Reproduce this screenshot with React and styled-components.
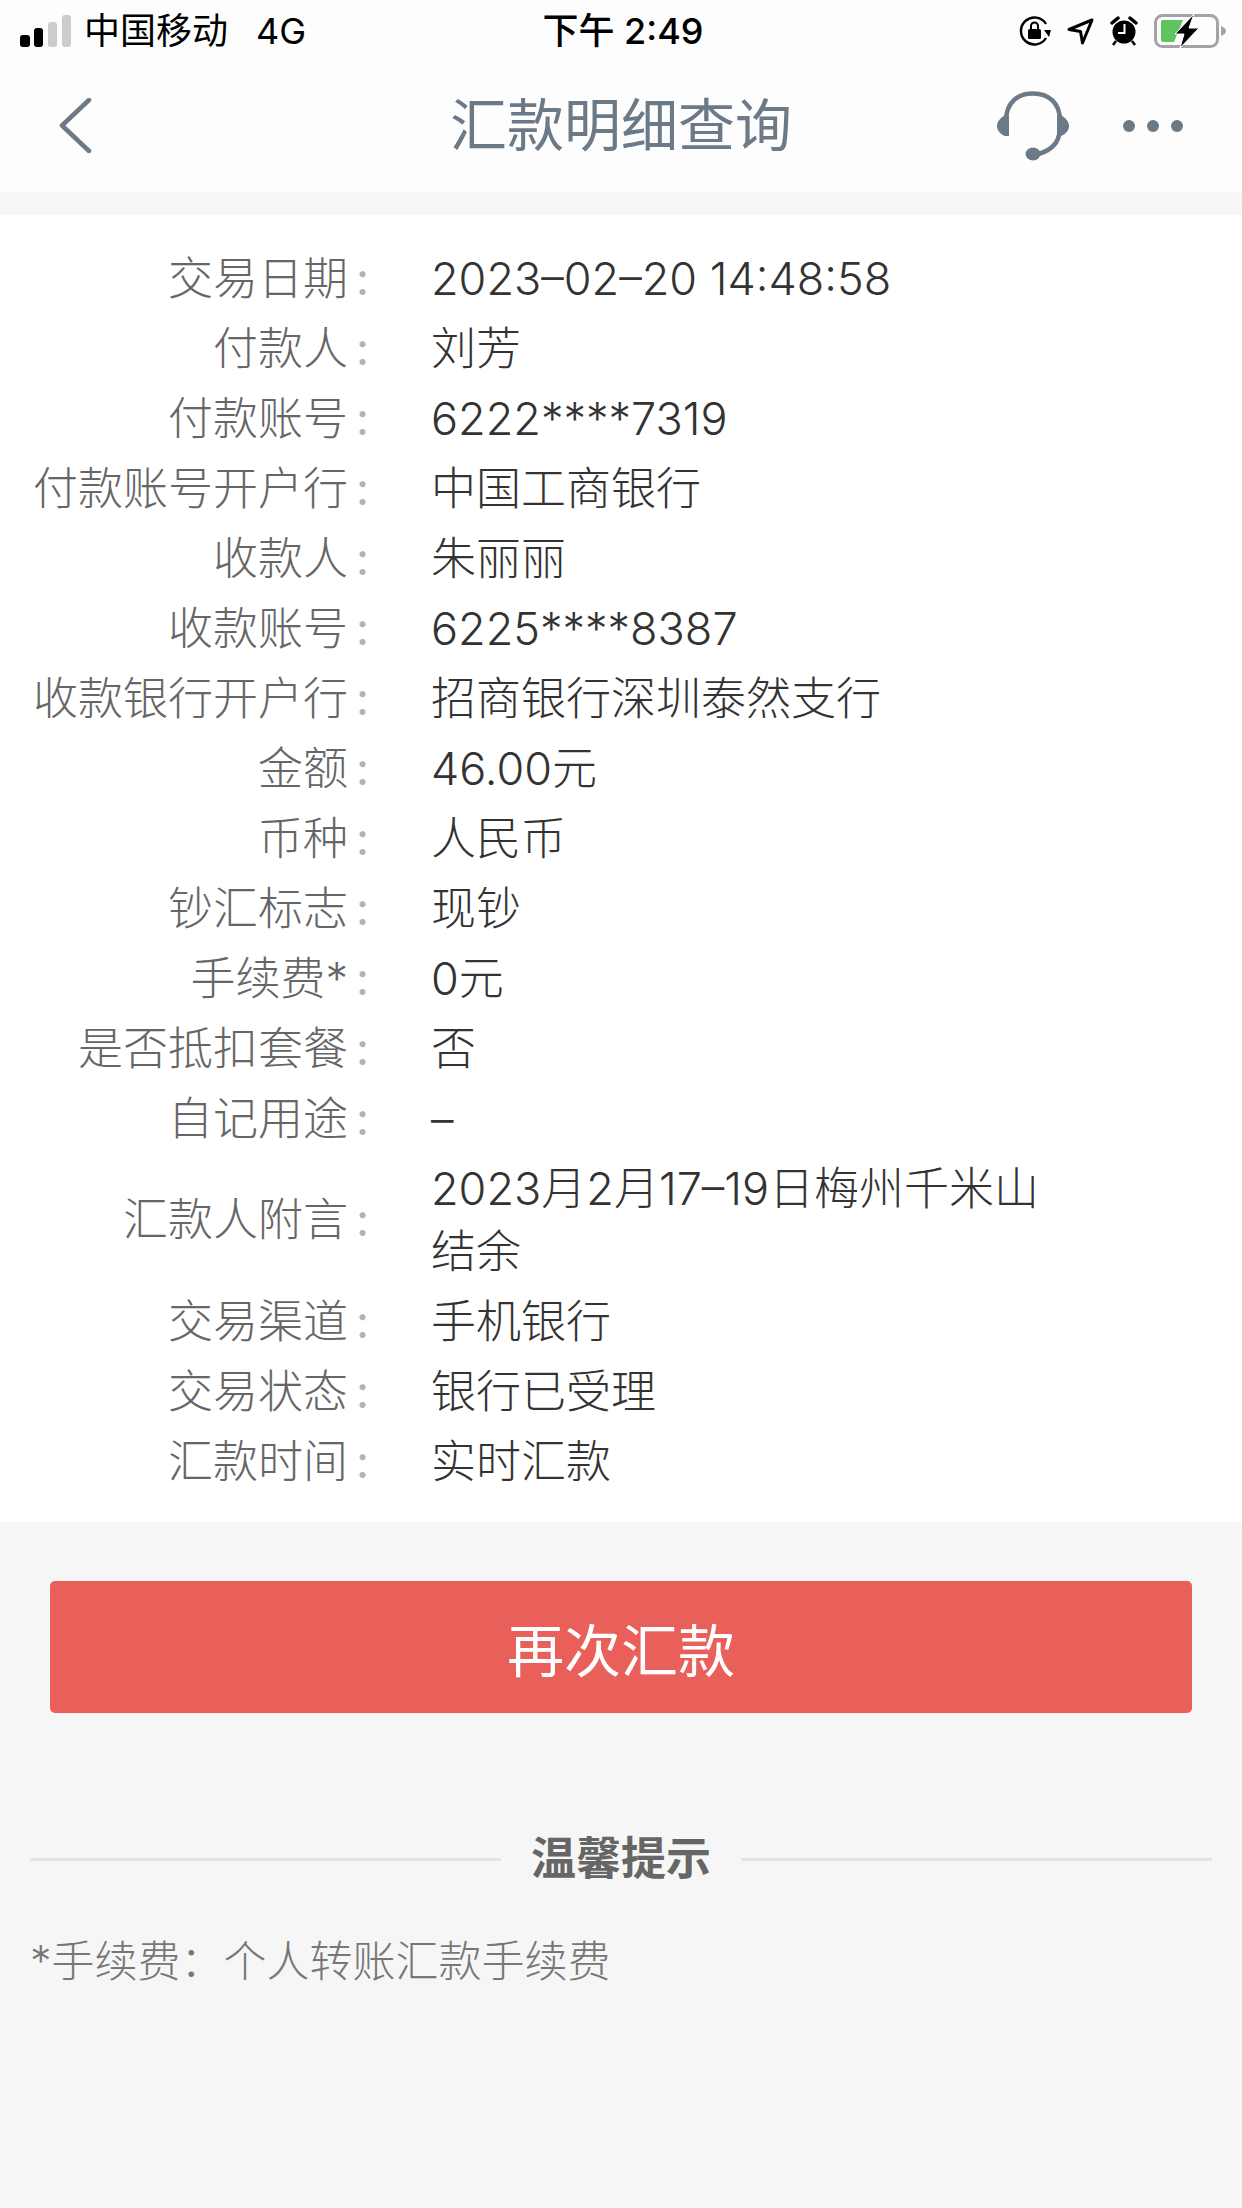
import styled, { createGlobalStyle } from "styled-components";

const rows = [
  ["交易日期", "2023–02–20 14:48:58"],
  ["付款人", "刘芳"],
  ["付款账号", "6222****7319"],
  ["付款账号开户行", "中国工商银行"],
  ["收款人", "朱丽丽"],
  ["收款账号", "6225****8387"],
  ["收款银行开户行", "招商银行深圳泰然支行"],
  ["金额", "46.00元"],
  ["币种", "人民币"],
  ["钞汇标志", "现钞"],
  ["手续费*", "0元"],
  ["是否抵扣套餐", "否"],
  ["自记用途", "–"],
  ["汇款人附言", "2023月2月17–19日梅州千米山结余"],
  ["交易渠道", "手机银行"],
  ["交易状态", "银行已受理"],
  ["汇款时间", "实时汇款"],
];

const App = () => {
  return (
    <Page lang="zh-CN">
      <GlobalStyle />

      <StatusBar>
        <StatusLeft>
          <svg width="52" height="32" viewBox="0 0 52 32">
            <rect x="0" y="20" width="10" height="12" rx="3" fill="#000" />
            <rect x="14" y="13" width="9" height="19" rx="3" fill="#000" />
            <rect x="28" y="7" width="9" height="25" rx="3" fill="#ccc" />
            <rect x="42" y="0" width="9" height="32" rx="3" fill="#ccc" />
          </svg>
          <Carrier>中国移动</Carrier>
          <Carrier>4G</Carrier>
        </StatusLeft>

        <Clock>下午 2:49</Clock>

        <StatusRight>
          <svg width="32" height="30" viewBox="0 0 32 30">
            <path d="M27 22A13.5 13.5 0 1 1 27 8" fill="none" stroke="#000" strokeWidth="2.4" />
            <path d="M25 14l5 7 2-7z" fill="#000" />
            <rect x="9" y="13" width="13" height="10" rx="1.5" fill="#000" />
            <path d="M12 13V10a3.5 3.5 0 0 1 7 0v3" fill="none" stroke="#000" strokeWidth="2" />
          </svg>
          <svg width="27" height="27" viewBox="0 0 27 27">
            <path d="M2 11.5L25 2 15.5 25 13.5 13.5z" fill="none" stroke="#000" strokeWidth="3" strokeLinejoin="round" />
          </svg>
          <svg width="28" height="30" viewBox="0 0 28 30">
            <circle cx="14" cy="16" r="11.5" fill="#000" />
            <path d="M2 7l6-5M26 7l-6-5" stroke="#000" strokeWidth="3.5" strokeLinecap="round" />
            <path d="M6 25l-3 4M22 25l3 4" stroke="#000" strokeWidth="2.5" />
            <path d="M14.5 8v9H8" fill="none" stroke="#fff" strokeWidth="2" />
          </svg>
          <svg width="72" height="34" viewBox="0 0 72 34">
            <rect x="1.5" y="1.5" width="62" height="31" rx="7" fill="none" stroke="#a3a3a3" strokeWidth="3" />
            <path d="M67 12c3 1 5 3 5 5s-2 4-5 5z" fill="#a3a3a3" />
            <path d="M9 6H29L20 28H9a2 2 0 0 1-2-2V8a2 2 0 0 1 2-2z" fill="#5fc45f" />
            <path d="M40 0L21 20H30L26 34 45 14H35z" fill="#000" stroke="#fff" strokeWidth="1" />
          </svg>
        </StatusRight>
      </StatusBar>

      <NavBar>
        <BackButton>
          <svg width="33" height="55" viewBox="0 0 33 55">
            <path d="M30 2L3 27.5 30 53" fill="none" stroke="#6b7a86" strokeWidth="4.5" strokeLinecap="round" strokeLinejoin="round" />
          </svg>
        </BackButton>
        <NavTitle>汇款明细查询</NavTitle>
        <NavActions>
          <svg width="72" height="70" viewBox="0 0 72 70">
            <path d="M9 30C9 11 21 2.500 36 2.500S63 11 63 30" fill="none" stroke="#6b7a86" strokeWidth="4.500" />
            <path d="M12 24H8C3 27 0 31 0 35s3 8 8 10h4zM60 24h4c5 3 8 7 8 11s-3 8-8 10h-4z" fill="#6b7a86" />
            <path d="M62 44C60 55 50 61 38 64" fill="none" stroke="#6b7a86" strokeWidth="4.500" />
            <ellipse cx="36" cy="63" rx="7.500" ry="6.500" fill="#6b7a86" />
          </svg>
          <MoreDots>
            <Dot />
            <Dot />
            <Dot />
          </MoreDots>
        </NavActions>
      </NavBar>

      <DetailCard>
        {rows.map(([label, value]) => (
          <Row key={label}>
            <Label>{label}</Label>
            <Colon>:</Colon>
            <Value>{value}</Value>
          </Row>
        ))}
      </DetailCard>

      <AgainButton>再次汇款</AgainButton>

      <TipHeader>
        <TipLine />
        <TipTitle>温馨提示</TipTitle>
        <TipLine />
      </TipHeader>
      <TipText>*手续费：个人转账汇款手续费</TipText>
    </Page>
  );
};

export default App;

const GlobalStyle = createGlobalStyle`
  html, body {
    margin: 0;
    padding: 0;
    background: #f6f6f6;
  }
`;

const Page = styled.div`
  width: 1242px;
  height: 2208px;
  overflow: hidden;
  background: #f6f6f6;
  font-family: Inter, "Noto Sans CJK SC", sans-serif;
`;

const StatusBar = styled.div`
  display: grid;
  grid-template-columns: 1fr auto 1fr;
  align-items: center;
  height: 62px;
  padding: 0 16px 0 20px;
  background: #fdfdfd;
  color: #000;
`;

const StatusLeft = styled.div`
  display: flex;
  align-items: center;
  gap: 28px;

  svg {
    margin-right: -16px;
  }
`;

const Carrier = styled.span`
  font-size: 36px;
  line-height: 62px;
`;

const Clock = styled.span`
  font-size: 36px;
  font-weight: 500;
  line-height: 62px;
`;

const StatusRight = styled.div`
  display: flex;
  align-items: center;
  justify-content: flex-end;
  gap: 16px;
`;

const NavBar = styled.div`
  display: grid;
  grid-template-columns: 1fr auto 1fr;
  align-items: center;
  height: 127px;
  padding: 0 59px 3px;
  background: #fdfdfd;
`;

const BackButton = styled.div`
  display: flex;
  align-items: center;
`;

const NavTitle = styled.h1`
  margin: 0;
  color: #6b7a86;
  font-size: 57px;
  font-weight: 400;
  line-height: 70px;
`;

const NavActions = styled.div`
  display: flex;
  align-items: center;
  justify-content: flex-end;
  gap: 54px;
`;

const MoreDots = styled.div`
  display: flex;
  gap: 12px;
`;

const Dot = styled.span`
  width: 12px;
  height: 12px;
  border-radius: 50%;
  background: #6b7a86;
`;

const DetailCard = styled.div`
  margin-top: 23px;
  padding: 28px 0 26px;
  background: #fff;
`;

const Row = styled.div`
  display: grid;
  grid-template-columns: 348px 83px 620px;
  align-items: center;
  font-size: 45px;
  line-height: 63px;
`;

const Label = styled.span`
  color: #666;
  font-weight: 300;
  text-align: right;
`;

const Colon = styled.span`
  padding-left: 8px;
  color: #a8b5bd;
`;

const Value = styled.span`
  padding: 3.5px 0;
  color: #333;
  font-weight: 300;
`;

const AgainButton = styled.div`
  display: flex;
  align-items: center;
  justify-content: center;
  height: 132px;
  margin: 59px 50px 0;
  border-radius: 5px;
  background: #e95f5a;
  color: #fff;
  font-size: 57px;
`;

const TipHeader = styled.div`
  display: flex;
  align-items: center;
  gap: 30px;
  margin-top: 116px;
  padding: 0 30px;
`;

const TipLine = styled.span`
  flex: 1;
  height: 3px;
  background: #e4e4e4;
`;

const TipTitle = styled.span`
  color: #666;
  font-size: 45px;
  font-weight: 700;
  line-height: 60px;
`;

const TipText = styled.p`
  margin: 42px 0 0;
  padding-left: 30px;
  color: #777;
  font-size: 43px;
  font-weight: 300;
  line-height: 60px;
`;
